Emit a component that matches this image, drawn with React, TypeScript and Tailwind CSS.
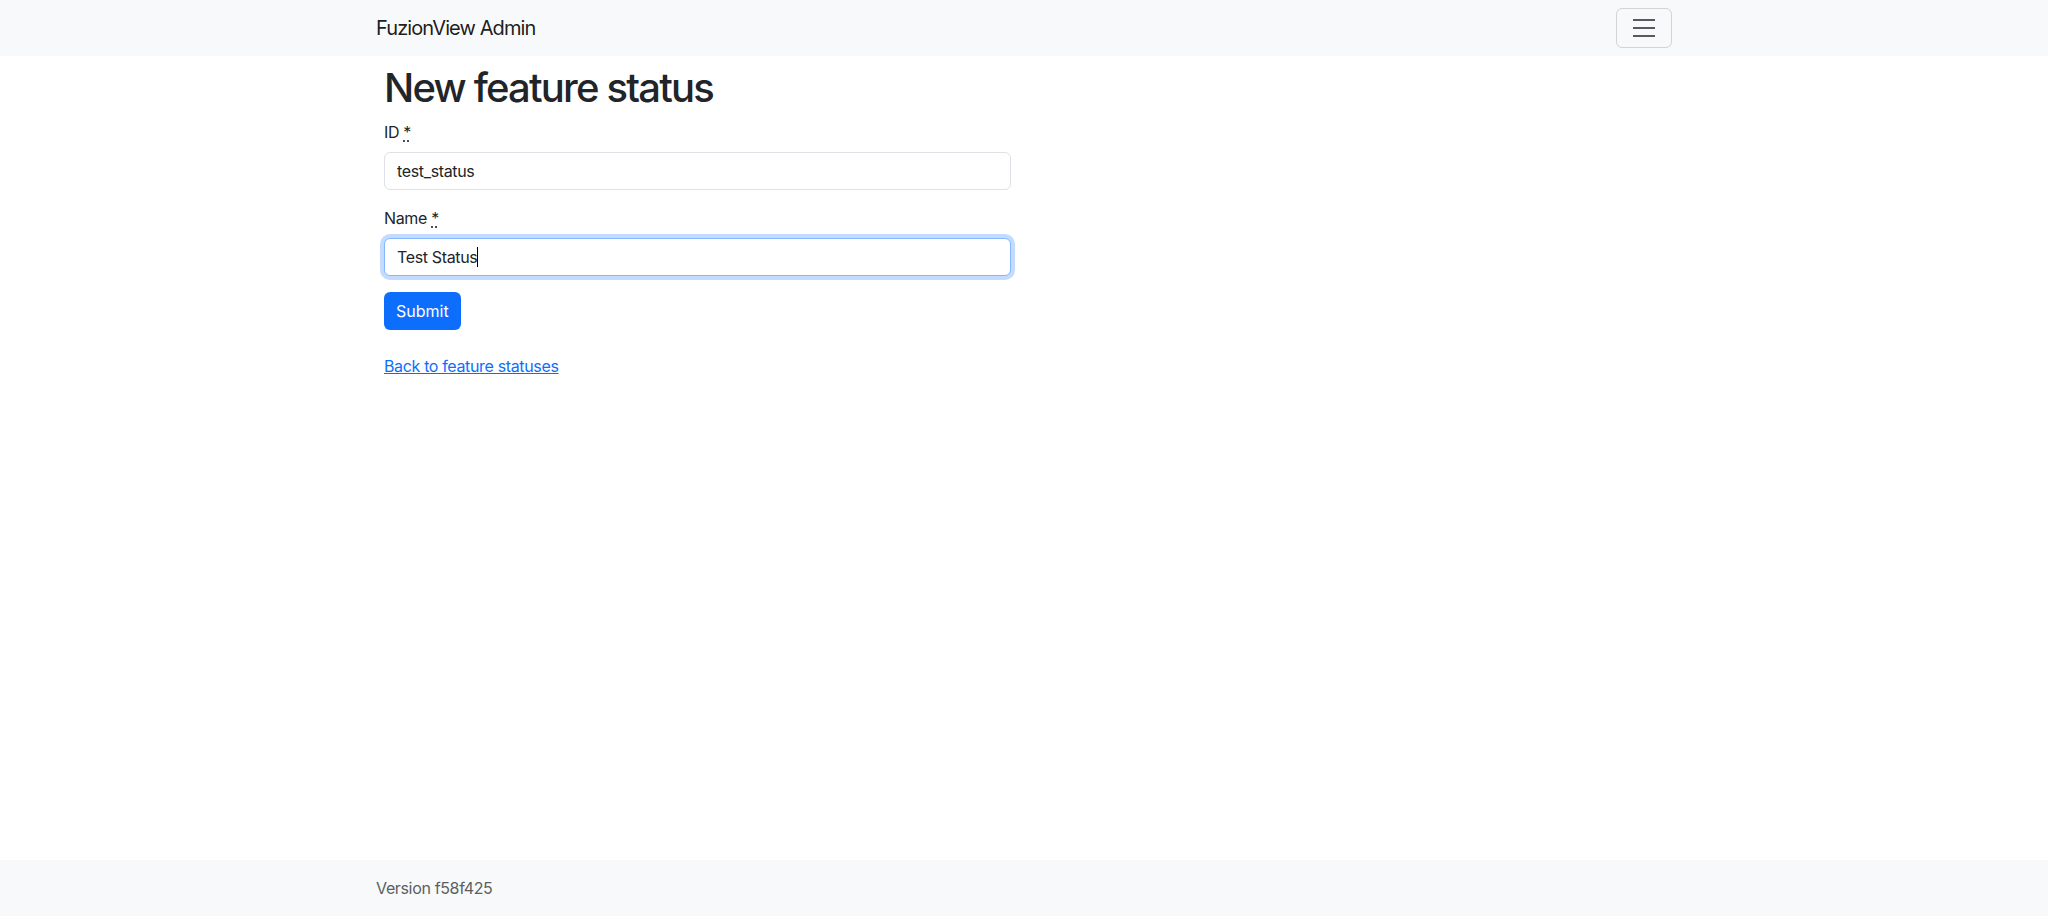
import React from "react";

function Required() {
  return (
    <abbr title="required" className="cursor-help underline decoration-dotted underline-offset-[3px]">
      *
    </abbr>
  );
}

export default function App() {
  return (
    <div className="min-h-screen flex flex-col bg-white text-[#212529] [font-family:Inter,'Liberation_Sans',Arial,sans-serif] tracking-[-0.35px]">
      <nav className="bg-[#f8f9fa] h-14 flex items-center">
        <div className="mx-auto w-[1320px] px-3 flex items-center justify-between">
          <a href="#" className="text-[20px] leading-[30px] text-black/90 tracking-[-0.9px]">
            FuzionView Admin
          </a>
          <button
            type="button"
            aria-label="Toggle navigation"
            className="w-14 h-10 flex items-center justify-center border border-black/15 rounded-md"
          >
            <svg width="30" height="30" viewBox="0 0 30 30" aria-hidden="true">
              <path
                d="M4 7h22M4 15h22M4 23h22"
                stroke="rgba(33,37,41,0.75)"
                strokeWidth="2"
                strokeLinecap="butt"
                strokeMiterlimit="10"
              />
            </svg>
          </button>
        </div>
      </nav>

      <main className="flex-1 pt-2">
        <div className="mx-auto w-[1320px] px-5">
          <h1 className="text-[40px] leading-[48px] font-medium mb-2 tracking-[-1.8px]">New feature status</h1>
          <form className="w-[627px]" onSubmit={(e) => e.preventDefault()}>
            <div className="mb-4">
              <label className="block text-[16px] leading-6 mb-2">
                ID <Required />
              </label>
              <input
                type="text"
                defaultValue="test_status"
                className="block w-full h-[38px] px-3 text-[16px] leading-6 tracking-[-0.35px] border border-[#dee2e6] rounded-md outline-none text-[#212529]"
              />
            </div>
            <div className="mb-4">
              <label className="block text-[16px] leading-6 mb-2">
                Name <Required />
              </label>
              <div className="flex items-center w-full h-[38px] px-3 text-[16px] leading-6 border border-[#86b7fe] rounded-md shadow-[0_0_0_4px_rgba(13,110,253,0.25)] bg-white">
                <span>Test Status</span>
                <span className="inline-block w-px h-[20px] bg-black"></span>
              </div>
            </div>
            <button
              type="submit"
              className="h-[38px] px-3 bg-[#0d6efd] text-white text-[16px] leading-6 rounded-md tracking-normal"
            >
              Submit
            </button>
          </form>
          <p className="mt-6">
            <a href="#" className="text-[#0d6efd] underline text-[16px] leading-6">
              Back to feature statuses
            </a>
          </p>
        </div>
      </main>

      <footer className="bg-[#f8f9fa] h-14 flex items-center">
        <div className="mx-auto w-[1320px] px-3">
          <span className="text-[16px] leading-6 text-[#5c5f62]">Version f58f425</span>
        </div>
      </footer>
    </div>
  );
}
